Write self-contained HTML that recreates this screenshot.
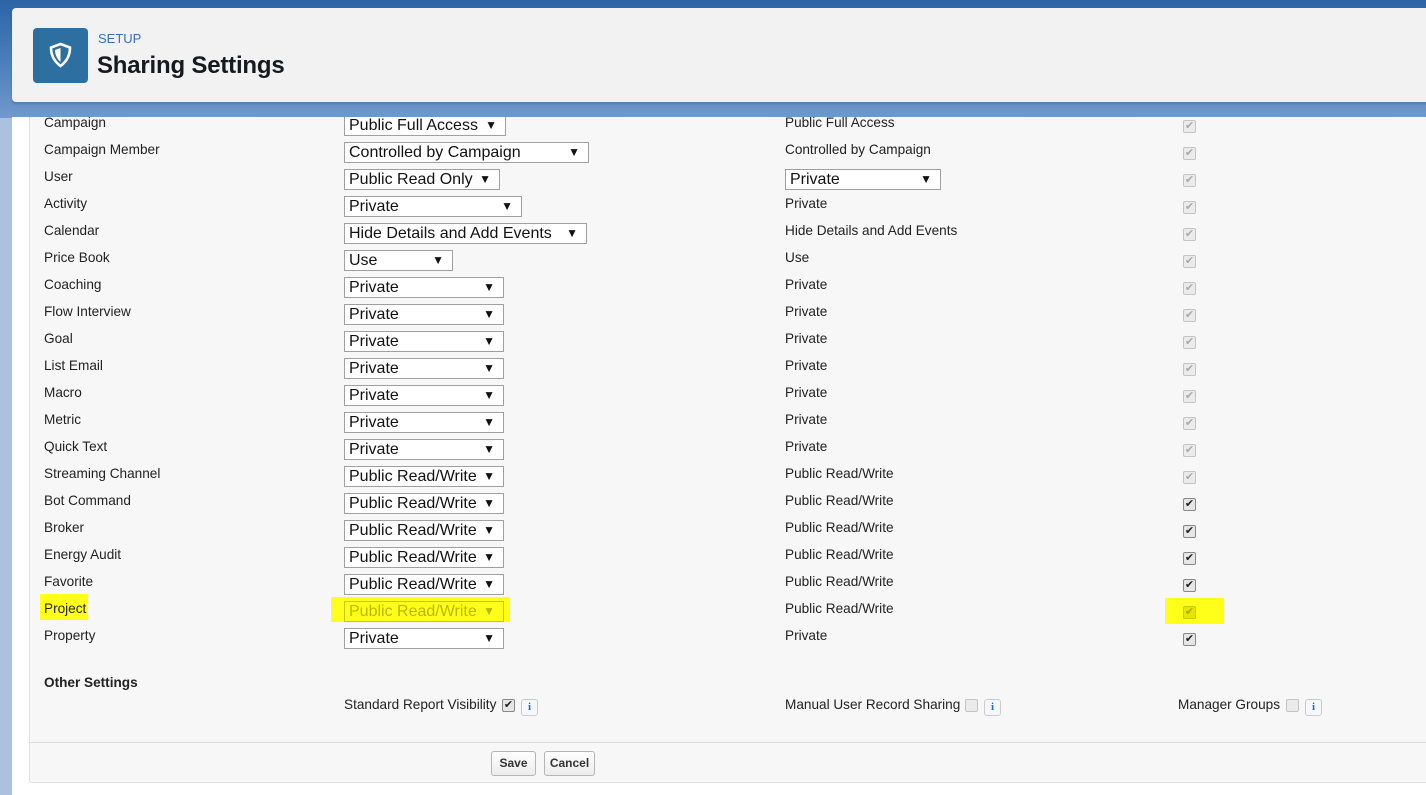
<!DOCTYPE html>
<html><head><meta charset="utf-8"><style>
*{margin:0;padding:0;box-sizing:border-box}
body{width:1426px;height:795px;overflow:hidden;background:#fff;font-family:"Liberation Sans",Arial,sans-serif;position:relative}
.bg{position:absolute;left:0;top:0;width:1426px;height:118px;background:linear-gradient(#2b65a6 0%,#4a7cbb 50%,#7198cc 100%)}
.strip{position:absolute;left:0;top:118px;width:12px;height:677px;background:#abc1df}
.hdr{position:absolute;left:12px;top:8px;width:1420px;height:94px;background:#f3f2f2;border-radius:4px;box-shadow:0 2px 2px rgba(0,0,0,.15)}
.icon{position:absolute;left:21px;top:20px;width:55px;height:55px;background:#2e6fa1;border-radius:4px}
.setup{position:absolute;left:86px;top:23px;font-size:13px;color:#3570b8}
.title{position:absolute;left:85px;top:44px;font-size:24px;font-weight:bold;color:#16191e;font-family:"Liberation Sans",sans-serif;letter-spacing:-0.2px}
.main{position:absolute;left:12px;top:117px;width:1414px;height:678px;background:#fff;overflow:hidden}
.panel{position:absolute;left:17px;top:-2px;width:1400px;height:668px;background:#f7f7f7;border:1px solid #e0e0e0;border-radius:3px}
.t{position:absolute;font-size:13.6px;color:#222;white-space:nowrap}
.sel{position:absolute;height:21px;border:1px solid #a0a0a0;background:#fff;font-size:16px;color:#111;padding-left:4px;line-height:19px;white-space:nowrap}
.sel:after{content:"▼";position:absolute;right:8px;top:0;font-size:12px}
.cb{position:absolute;width:13px;height:13px;border:1px solid #c4c4c4;border-radius:2px;background:#ebebeb;font-size:11px;line-height:11px;text-align:center;color:#aaa}
.cb.on{color:#222;border-color:#888;background:#e6e6e6}
.hl{position:absolute;background:#ffff1a}
.info{position:absolute;width:17px;height:17px;border:1px solid #ccc;border-radius:3px;background:#f4f8fc;color:#1d6ad6;font-size:11px;font-weight:bold;text-align:center;line-height:15px;font-family:"Liberation Serif",serif}
.btn{position:absolute;height:25px;border:1px solid #b5b5b5;border-radius:3px;background:linear-gradient(#fff,#ececec);font-size:12px;font-weight:bold;color:#333;text-align:center;line-height:23px}
</style></head><body>
<div class="bg"></div>
<div class="strip"></div>
<div class="hdr">
<div class="icon"><svg width="55" height="55" viewBox="0 0 55 55"><path d="M27.5 16 L37 19.5 Q37 31 27.5 38 Q18 31 18 19.5 Z" fill="none" stroke="#fff" stroke-width="2.6"/><path d="M27.5 20 L27.5 34 Q22 29 22 22 Z" fill="#fff"/></svg></div>
<div class="setup">SETUP</div>
<div class="title">Sharing Settings</div>
</div>
<div class="main">
<div class="panel"></div>
<div class="hl" style="left:28px;top:477px;width:48px;height:26px"></div>
<div class="hl" style="left:319px;top:480px;width:179px;height:25px"></div>
<div class="hl" style="left:1153px;top:481px;width:59px;height:26px"></div>
<div id="rows"></div>
<div class="t" style="left:32px;top:558px;font-weight:bold">Other Settings</div>
<div class="t" style="left:332px;top:580px">Standard Report Visibility</div>
<div class="cb on" style="left:490px;top:582px">✔</div>
<div class="info" style="left:509px;top:582px">i</div>
<div class="t" style="left:773px;top:580px">Manual User Record Sharing</div>
<div class="cb" style="left:953px;top:582px"></div>
<div class="info" style="left:972px;top:582px">i</div>
<div class="t" style="left:1166px;top:580px">Manager Groups</div>
<div class="cb" style="left:1274px;top:582px"></div>
<div class="info" style="left:1293px;top:582px">i</div>
<div style="position:absolute;left:17px;top:625px;width:1400px;border-top:1px solid #ddd"></div>
<div class="btn" style="left:479px;top:634px;width:45px">Save</div>
<div class="btn" style="left:532px;top:634px;width:51px">Cancel</div>
</div>
<script>
var R=[["Campaign","Public Full Access",162,"Public Full Access",0],
["Campaign Member","Controlled by Campaign",245,"Controlled by Campaign",0],
["User","Public Read Only",156,"SEL",0],
["Activity","Private",178,"Private",0],
["Calendar","Hide Details and Add Events",243,"Hide Details and Add Events",0],
["Price Book","Use",109,"Use",0],
["Coaching","Private",160,"Private",0],
["Flow Interview","Private",160,"Private",0],
["Goal","Private",160,"Private",0],
["List Email","Private",160,"Private",0],
["Macro","Private",160,"Private",0],
["Metric","Private",160,"Private",0],
["Quick Text","Private",160,"Private",0],
["Streaming Channel","Public Read/Write",160,"Public Read/Write",0],
["Bot Command","Public Read/Write",160,"Public Read/Write",1],
["Broker","Public Read/Write",160,"Public Read/Write",1],
["Energy Audit","Public Read/Write",160,"Public Read/Write",1],
["Favorite","Public Read/Write",160,"Public Read/Write",1],
["Project","Public Read/Write",160,"Public Read/Write",2],
["Property","Private",160,"Private",1]];
var h="";
R.forEach(function(r,i){var y=-2+27*i;
h+='<div class="t" style="left:32px;top:'+(y)+'px">'+r[0]+'</div>';
var st=r[4]==2?'background:transparent;color:#b8b800;border-color:#c8c800':'';
h+='<div class="sel" style="left:332px;top:'+(y)+'px;width:'+r[2]+'px;'+st+'">'+r[1]+'</div>';
if(r[3]=="SEL")h+='<div class="sel" style="left:773px;top:'+y+'px;width:156px">Private</div>';
else h+='<div class="t" style="left:773px;top:'+y+'px">'+r[3]+'</div>';
var c=r[4]==1?'cb on':'cb';var cs=r[4]==2?'background:#e6e600;border-color:#c8c800;color:#a8a800':'';
h+='<div class="'+c+'" style="left:1171px;top:'+(y+5)+'px;'+cs+'">✔</div>';});
document.getElementById("rows").innerHTML=h;
</script>
</body></html>
